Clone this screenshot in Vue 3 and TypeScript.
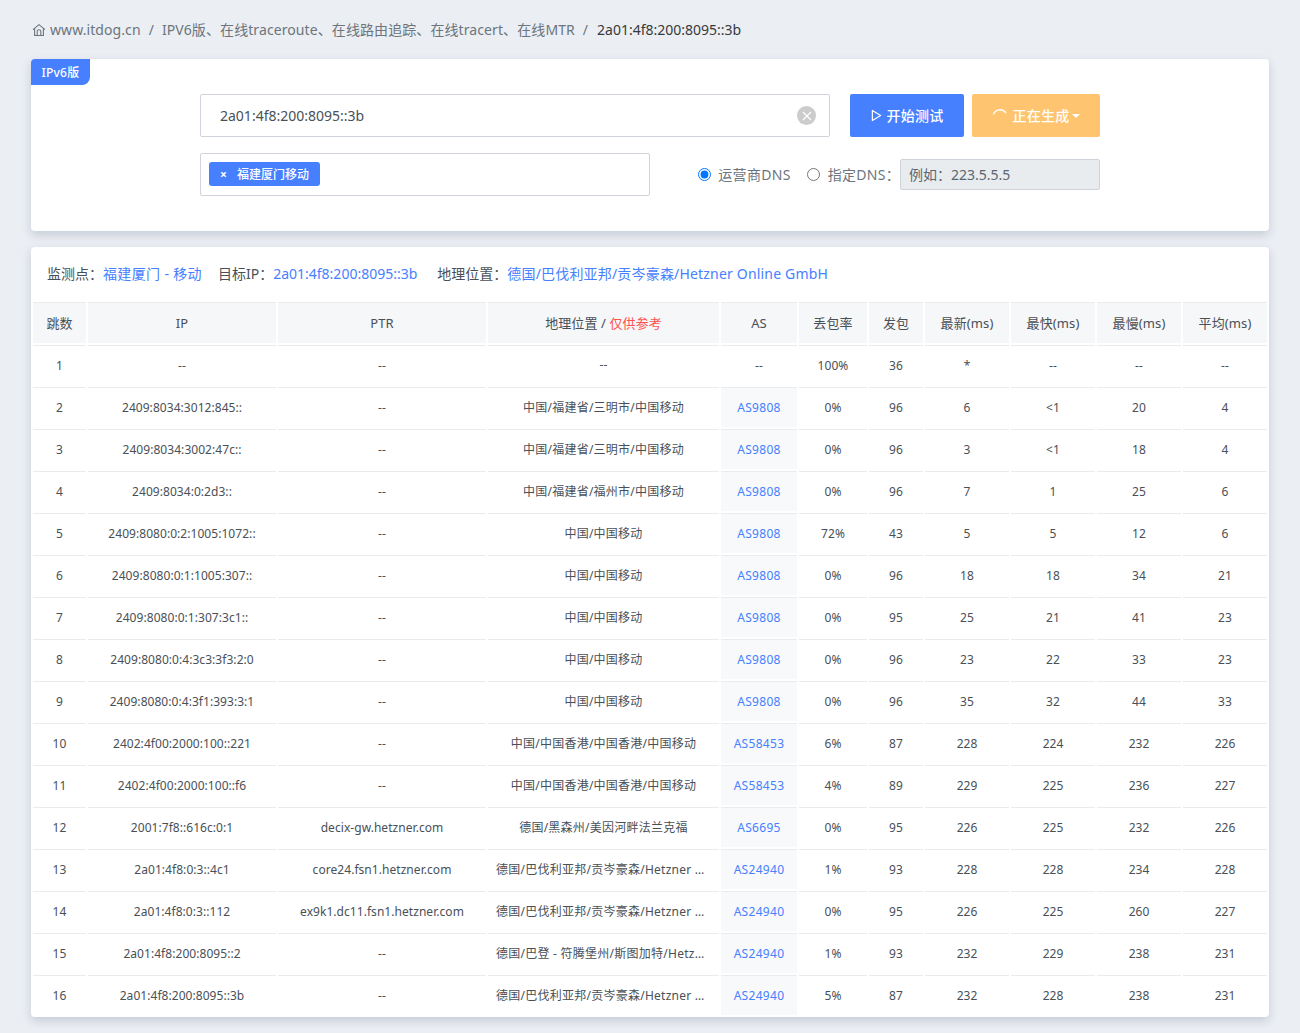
<script setup lang="ts">
interface Hop {
  ip: string
  ptr: string
  geo: string
  as: string
  loss: string
  sent: number
  last: string
  best: string
  worst: string
  avg: string
}

const columns = ['跳数', 'IP', 'PTR', '', 'AS', '丢包率', '发包', '最新(ms)', '最快(ms)', '最慢(ms)', '平均(ms)']

const hops: Hop[] = [
  { ip: '--', ptr: '--', geo: '--', as: '--', loss: '100%', sent: 36, last: '*', best: '--', worst: '--', avg: '--' },
  { ip: '2409:8034:3012:845::', ptr: '--', geo: '中国/福建省/三明市/中国移动', as: 'AS9808', loss: '0%', sent: 96, last: '6', best: '<1', worst: '20', avg: '4' },
  { ip: '2409:8034:3002:47c::', ptr: '--', geo: '中国/福建省/三明市/中国移动', as: 'AS9808', loss: '0%', sent: 96, last: '3', best: '<1', worst: '18', avg: '4' },
  { ip: '2409:8034:0:2d3::', ptr: '--', geo: '中国/福建省/福州市/中国移动', as: 'AS9808', loss: '0%', sent: 96, last: '7', best: '1', worst: '25', avg: '6' },
  { ip: '2409:8080:0:2:1005:1072::', ptr: '--', geo: '中国/中国移动', as: 'AS9808', loss: '72%', sent: 43, last: '5', best: '5', worst: '12', avg: '6' },
  { ip: '2409:8080:0:1:1005:307::', ptr: '--', geo: '中国/中国移动', as: 'AS9808', loss: '0%', sent: 96, last: '18', best: '18', worst: '34', avg: '21' },
  { ip: '2409:8080:0:1:307:3c1::', ptr: '--', geo: '中国/中国移动', as: 'AS9808', loss: '0%', sent: 95, last: '25', best: '21', worst: '41', avg: '23' },
  { ip: '2409:8080:0:4:3c3:3f3:2:0', ptr: '--', geo: '中国/中国移动', as: 'AS9808', loss: '0%', sent: 96, last: '23', best: '22', worst: '33', avg: '23' },
  { ip: '2409:8080:0:4:3f1:393:3:1', ptr: '--', geo: '中国/中国移动', as: 'AS9808', loss: '0%', sent: 96, last: '35', best: '32', worst: '44', avg: '33' },
  { ip: '2402:4f00:2000:100::221', ptr: '--', geo: '中国/中国香港/中国香港/中国移动', as: 'AS58453', loss: '6%', sent: 87, last: '228', best: '224', worst: '232', avg: '226' },
  { ip: '2402:4f00:2000:100::f6', ptr: '--', geo: '中国/中国香港/中国香港/中国移动', as: 'AS58453', loss: '4%', sent: 89, last: '229', best: '225', worst: '236', avg: '227' },
  { ip: '2001:7f8::616c:0:1', ptr: 'decix-gw.hetzner.com', geo: '德国/黑森州/美因河畔法兰克福', as: 'AS6695', loss: '0%', sent: 95, last: '226', best: '225', worst: '232', avg: '226' },
  { ip: '2a01:4f8:0:3::4c1', ptr: 'core24.fsn1.hetzner.com', geo: '德国/巴伐利亚邦/贡岑豪森/Hetzner Online GmbH', as: 'AS24940', loss: '1%', sent: 93, last: '228', best: '228', worst: '234', avg: '228' },
  { ip: '2a01:4f8:0:3::112', ptr: 'ex9k1.dc11.fsn1.hetzner.com', geo: '德国/巴伐利亚邦/贡岑豪森/Hetzner Online GmbH', as: 'AS24940', loss: '0%', sent: 95, last: '226', best: '225', worst: '260', avg: '227' },
  { ip: '2a01:4f8:200:8095::2', ptr: '--', geo: '德国/巴登 - 符腾堡州/斯图加特/Hetzner Online GmbH', as: 'AS24940', loss: '1%', sent: 93, last: '232', best: '229', worst: '238', avg: '231' },
  { ip: '2a01:4f8:200:8095::3b', ptr: '--', geo: '德国/巴伐利亚邦/贡岑豪森/Hetzner Online GmbH', as: 'AS24940', loss: '5%', sent: 87, last: '232', best: '228', worst: '238', avg: '231' },
]

// header cells with only latin letters sit a pixel lower than the chinese ones
const isLatin = (i: number) => i === 1 || i === 2 || i === 4
</script>

<template>
  <div class="page">
    <nav class="crumbs">
      <svg class="home" viewBox="0 0 14 14" width="14" height="14">
        <path d="M1 6.6 7 1.6l6 5M2.6 5.4V12.5h8.8V5.4M5.2 12.5V8.6a1.8 1.8 0 0 1 3.6 0v3.9" fill="none" stroke="#6c757d" stroke-width="1.1" />
      </svg>
      <span class="crumb site">www.itdog.cn</span>
      <span class="sep">/</span>
      <span class="crumb long">IPV6版、在线traceroute、在线路由追踪、在线tracert、在线MTR</span>
      <span class="sep">/</span>
      <span class="crumb current">2a01:4f8:200:8095::3b</span>
    </nav>

    <section class="card form-card">
      <div class="ribbon">IPv6版</div>
      <div class="form-inner">
        <div class="form-row">
          <div class="host-box">
            <input class="host-input" type="text" value="2a01:4f8:200:8095::3b">
            <span class="clear">
              <svg viewBox="0 0 10 10" width="10" height="10">
                <path d="M1 1 9 9M9 1 1 9" stroke="#fff" stroke-width="1.2" />
              </svg>
            </span>
          </div>
          <button class="btn btn-blue">
            <svg viewBox="0 0 12 14" width="11" height="13">
              <path d="M1.5 1.5 10.5 7l-9 5.5z" fill="none" stroke="#fff" stroke-width="1.3" stroke-linejoin="round" />
            </svg>
            <span class="btn-text">开始测试</span>
          </button>
          <button class="btn btn-orange">
            <svg class="spin" viewBox="0 0 16 16" width="16" height="16">
              <path d="M1.5 6.5A7 7 0 0 1 14 5" fill="none" stroke="#fff" stroke-width="1.4" />
            </svg>
            <span class="btn-text">正在生成</span>
            <span class="caret"></span>
          </button>
        </div>
        <div class="form-row second">
          <div class="tag-box">
            <span class="tag"><i class="tag-x">×</i><span>福建厦门移动</span></span>
          </div>
          <div class="dns">
            <label class="radio"><input type="radio" name="dns" checked><span>运营商DNS</span></label>
            <label class="radio"><input type="radio" name="dns"><span>指定DNS：</span></label>
            <input class="dns-input" type="text" placeholder="例如：223.5.5.5" disabled>
          </div>
        </div>
      </div>
    </section>

    <section class="card result-card">
      <div class="meta">
        <span>监测点：<a class="meta-node">福建厦门 - 移动</a></span>
        <span>目标IP：<a>2a01:4f8:200:8095::3b</a></span>
        <span class="meta-geo">地理位置：<a>德国/巴伐利亚邦/贡岑豪森/Hetzner Online GmbH</a></span>
      </div>
      <table class="hops">
        <colgroup>
          <col class="c-hop"><col class="c-ip"><col class="c-ptr"><col class="c-geo"><col class="c-as">
          <col class="c-loss"><col class="c-sent"><col class="c-ms"><col class="c-ms"><col class="c-ms"><col class="c-ms">
        </colgroup>
        <thead>
          <tr>
            <th v-for="(col, i) in columns" :key="i" :class="{ latin: isLatin(i) }">
              <template v-if="i === 3">地理位置 / <span class="warn">仅供参考</span></template>
              <template v-else>{{ col }}</template>
            </th>
          </tr>
        </thead>
        <tbody>
          <tr v-for="(hop, i) in hops" :key="i">
            <td>{{ i + 1 }}</td>
            <td>{{ hop.ip }}</td>
            <td>{{ hop.ptr }}</td>
            <td class="geo">{{ hop.geo }}</td>
            <td :class="{ 'as-cell': hop.as !== '--' }">{{ hop.as }}</td>
            <td>{{ hop.loss }}</td>
            <td>{{ hop.sent }}</td>
            <td>{{ hop.last }}</td>
            <td>{{ hop.best }}</td>
            <td>{{ hop.worst }}</td>
            <td>{{ hop.avg }}</td>
          </tr>
        </tbody>
      </table>
    </section>
  </div>
</template>

<style scoped>
.page {
  box-sizing: border-box;
  height: 1033px;
  overflow: hidden;
  padding: 0 31px;
  background: #ebeef3;
  font-family: "Noto Sans", "Noto Sans CJK SC", sans-serif;
  color: #373a3c;
}

.crumbs {
  box-sizing: border-box;
  display: flex;
  align-items: center;
  height: 59px;
  padding-bottom: 1px;
  font-size: 14px;
  color: #6c757d;
}

.home {
  margin: 1px 4px 0 1px;
}

.site {
  letter-spacing: 0.08px;
}

.sep {
  margin: 0 8px;
}

.long {
  letter-spacing: 0.09px;
}

.current {
  margin-left: 1px;
  color: #373a3c;
}

.card {
  position: relative;
  background: #fff;
  border-radius: 4px;
  box-shadow: 0 4px 10px rgba(70, 90, 120, 0.22);
}

.form-card {
  height: 172px;
  margin-bottom: 16px;
}

.ribbon {
  position: absolute;
  left: 0;
  top: 0;
  width: 59px;
  height: 26px;
  line-height: 27px;
  text-align: center;
  font-size: 12px;
  font-weight: 500;
  letter-spacing: 0.2px;
  color: #fff;
  background: #4680ff;
  border-radius: 4px 0 8px 0;
}

.form-inner {
  width: 900px;
  margin: 0 auto;
  padding-top: 35px;
}

.form-row {
  display: flex;
  height: 43px;
}

.form-row.second {
  margin-top: 16px;
  justify-content: space-between;
}

.host-box {
  position: relative;
  width: 630px;
  margin-right: 20px;
}

.host-input {
  box-sizing: border-box;
  width: 100%;
  height: 43px;
  padding: 0 40px 0 19px;
  border: 1px solid #ced4da;
  border-radius: 2px;
  font: inherit;
  font-size: 14px;
  color: #495057;
  outline: none;
}

.clear {
  position: absolute;
  right: 14px;
  top: 12px;
  display: flex;
  align-items: center;
  justify-content: center;
  width: 19px;
  height: 19px;
  border-radius: 50%;
  background: #ccc;
}

.btn {
  display: flex;
  align-items: center;
  justify-content: center;
  height: 43px;
  border: 0;
  border-radius: 2px;
  padding: 0;
  font: inherit;
  font-size: 14px;
  font-weight: 500;
  color: #fff;
}

.btn-text {
  padding-bottom: 2px;
  letter-spacing: 0.2px;
}

.btn-blue {
  width: 114px;
  gap: 5px;
  margin-right: 8px;
  background: #4680ff;
}

.btn-orange {
  width: 128px;
  gap: 5px;
  background: #ffc470;
}

.caret {
  width: 0;
  height: 0;
  margin-left: -2px;
  border-left: 4px solid transparent;
  border-right: 4px solid transparent;
  border-top: 4px solid #fff;
}

.tag-box {
  box-sizing: border-box;
  width: 450px;
  height: 43px;
  padding: 8px;
  border: 1px solid #ced4da;
  border-radius: 2px;
}

.tag {
  display: flex;
  align-items: center;
  height: 24px;
  width: 111px;
  box-sizing: border-box;
  padding-left: 11px;
  border-radius: 3px;
  background: #4680ff;
  color: #fff;
  font-size: 12px;
  font-weight: 500;
}

.tag-x {
  font-style: normal;
  font-weight: 700;
  margin-right: 10px;
}

.dns {
  display: flex;
  align-items: center;
  height: 43px;
  font-size: 14px;
  color: #6c757d;
}

.radio {
  display: flex;
  align-items: center;
  margin-right: 16px;
  letter-spacing: 0.3px;
}

.radio span {
  padding-bottom: 2px;
}

.radio:nth-child(2) {
  margin-right: 0;
}

.radio input {
  width: 13px;
  height: 13px;
  margin: 0 7px 0 0;
}

.radio:nth-child(2) input {
  margin-right: 8px;
}

.dns-input {
  box-sizing: border-box;
  width: 200px;
  height: 31px;
  padding: 0 8px;
  border: 1px solid #ced4da;
  border-radius: 2px;
  background: #e9ecef;
  font: inherit;
  font-size: 14px;
}

.dns-input::placeholder {
  color: #5c6670;
  opacity: 1;
}

.result-card {
  height: 770px;
}

.meta {
  box-sizing: border-box;
  display: flex;
  align-items: center;
  gap: 16px;
  height: 53px;
  padding: 0 0 2px 16px;
  font-size: 14px;
  color: #495057;
}

.meta a {
  color: #4680ff;
}

.meta a.meta-node {
  letter-spacing: 0.35px;
}

.meta-geo {
  margin-left: 4px;
}

.meta-geo a {
  letter-spacing: 0.18px;
}

.hops {
  table-layout: fixed;
  width: 1238px;
  border-collapse: separate;
  border-spacing: 2px;
  font-size: 12px;
  text-align: center;
}

.c-hop { width: 53px; }
.c-ip { width: 188px; }
.c-ptr { width: 208px; }
.c-geo { width: 231px; }
.c-as { width: 76px; }
.c-loss { width: 68px; }
.c-sent { width: 54px; }
.c-ms { width: 84px; }

th {
  box-sizing: border-box;
  height: 41px;
  padding: 0 0 2px;
  border-top: 1px solid #e9ecef;
  background: #f6f7f8;
  font-size: 13px;
  font-weight: 400;
  color: #495057;
  letter-spacing: 0.1px;
}

th.latin {
  padding-bottom: 0;
}

.warn {
  color: #ff5252;
}

td {
  box-sizing: border-box;
  height: 40px;
  padding: 0;
  border-top: 1px solid #e9ecef;
  color: #495057;
  white-space: nowrap;
  letter-spacing: 0.05px;
}

td.geo {
  padding: 0 8px 2px;
  overflow: hidden;
  text-overflow: ellipsis;
  letter-spacing: 0.25px;
}

td.as-cell {
  background: #f8f9fa;
  color: #4680ff;
  letter-spacing: 0.3px;
}
</style>
